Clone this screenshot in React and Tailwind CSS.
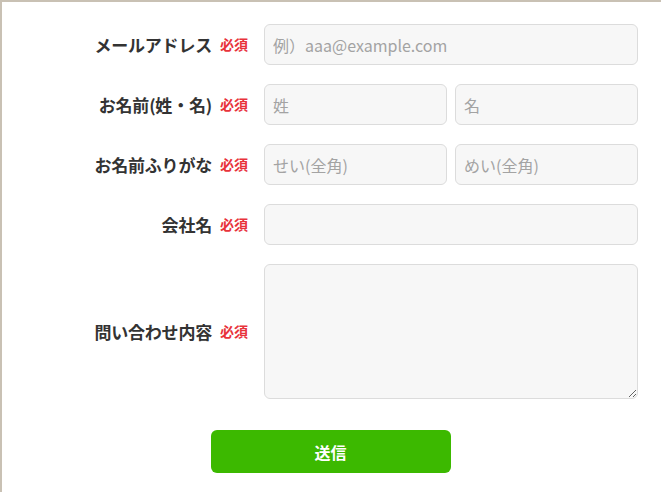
import React from 'react';

const font = { fontFamily: '"Noto Sans CJK JP", "Noto Sans", sans-serif' };

const inputCls =
  'h-[41px] w-full rounded-md border border-[#dcdcdc] bg-[#f7f7f7] px-2 text-[16px] text-[#333] placeholder:text-[#a3a3a3] outline-none';

const Label = ({ children }) => (
  <div className="flex w-[246px] shrink-0 items-center justify-end">
    <span className="text-[17px] font-bold text-[#333] tracking-[-0.2px]">{children}</span>
    <span className="ml-[8px] text-[14px] font-bold text-[#e8333b]">必須</span>
  </div>
);

const Row = ({ label, children }) => (
  <div className="flex items-center">
    <Label>{label}</Label>
    <div className="ml-[16px] flex w-[374px] gap-[8px]">{children}</div>
  </div>
);

export default function App() {
  return (
    <div
      className="h-[492px] w-[661px] overflow-hidden border-l-2 border-t-2 border-[#c9c1b4] bg-white pt-[22px]"
      style={font}
    >
      <form className="flex flex-col gap-[19px]" onSubmit={(e) => e.preventDefault()}>
        <Row label="メールアドレス">
          <input className={inputCls} placeholder="例）aaa@example.com" />
        </Row>
        <Row label="お名前(姓・名)">
          <input className={inputCls} placeholder="姓" />
          <input className={inputCls} placeholder="名" />
        </Row>
        <Row label="お名前ふりがな">
          <input className={inputCls} placeholder="せい(全角)" />
          <input className={inputCls} placeholder="めい(全角)" />
        </Row>
        <Row label="会社名">
          <input className={inputCls} />
        </Row>
        <Row label="問い合わせ内容">
          <textarea className="h-[135px] w-full rounded-md border border-[#dcdcdc] bg-[#f7f7f7] px-2 py-1 text-[16px] outline-none" />
        </Row>
        <div className="flex justify-center pt-[12px] pr-[2px]">
          <button
            type="submit"
            className="h-[43px] w-[240px] rounded-md bg-[#3cb900] text-[16px] font-bold text-white"
          >
            送信
          </button>
        </div>
      </form>
    </div>
  );
}
